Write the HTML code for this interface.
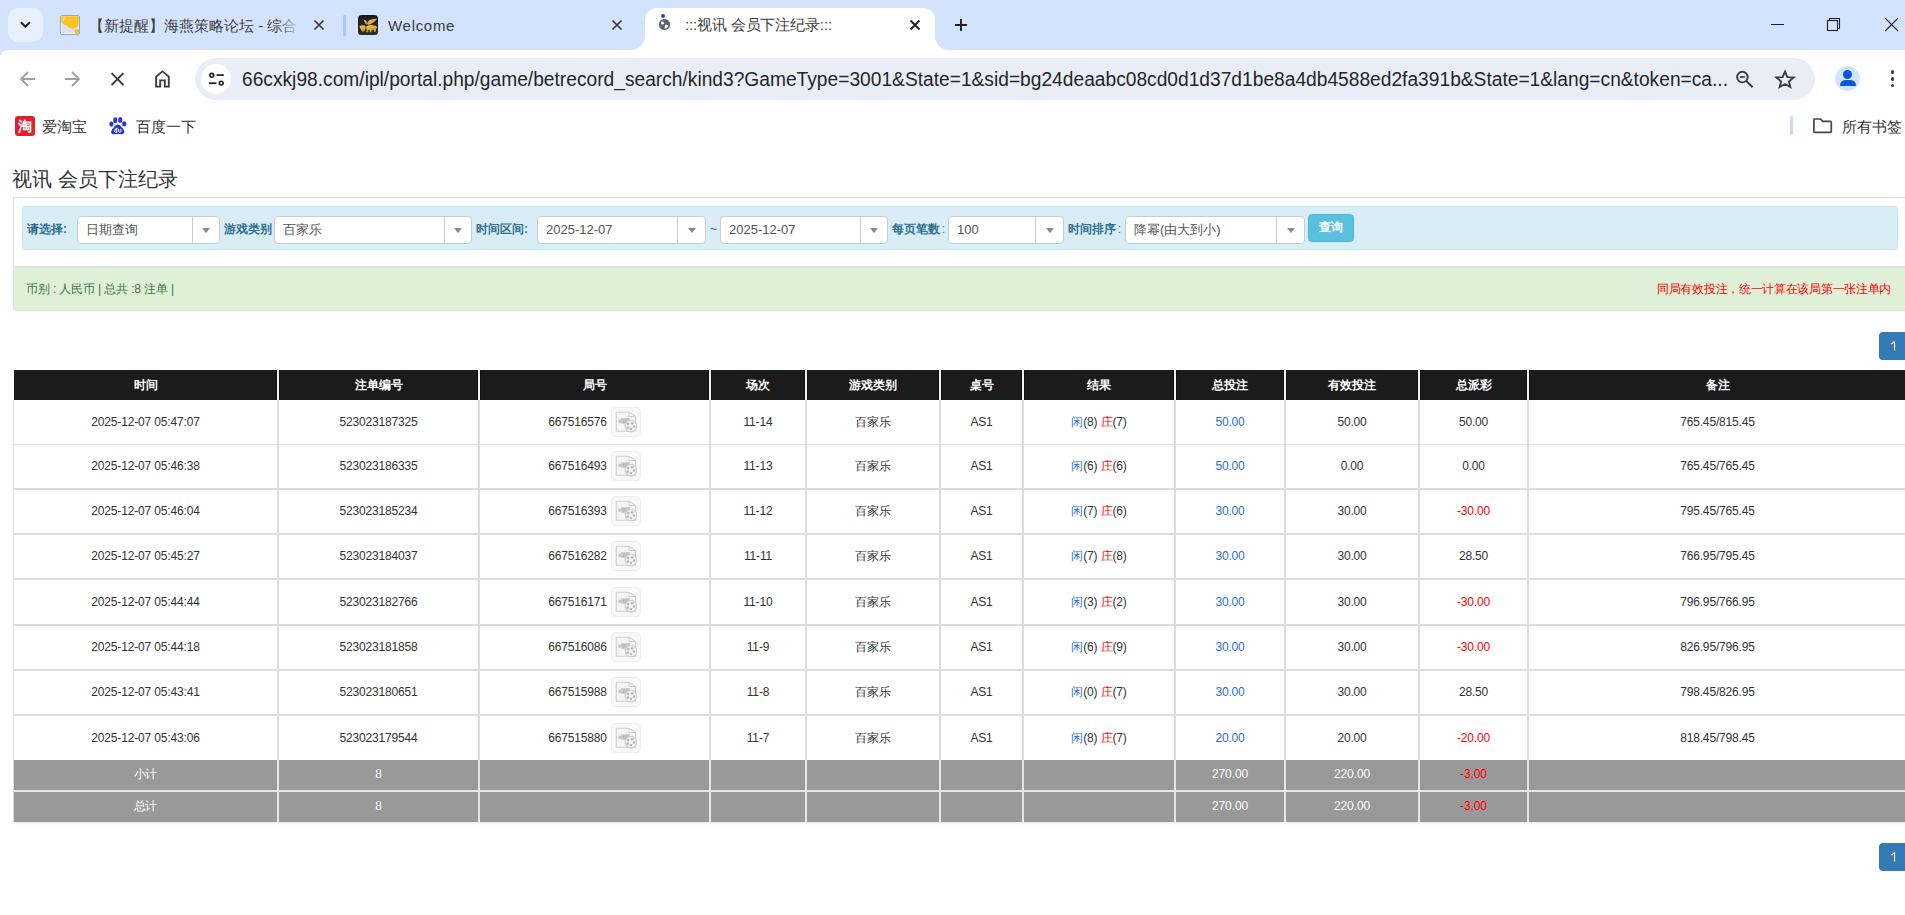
<!DOCTYPE html>
<html><head><meta charset="utf-8">
<style>
*{box-sizing:border-box}
html,body{margin:0;padding:0}
body{width:1905px;height:915px;overflow:hidden;position:relative;background:#fff;font-family:"Liberation Sans",sans-serif;color:#333}
.a{position:absolute}
/* chrome */
#strip{left:0;top:0;width:1905px;height:60px;background:#d3e3fd}
#toolbar{left:0;top:50px;width:1905px;height:865px;background:#fff;border-radius:8px 0 0 0}
.tabtxt{font-size:15px;color:#3c3c3c;white-space:nowrap;overflow:hidden;line-height:20px}
#omni{left:195px;top:58px;width:1620px;height:42px;border-radius:21px;background:#e9eef6}
#url{left:242px;top:68px;font-size:19.19px;line-height:22px;color:#262626;white-space:nowrap;transform:scaleY(1.08);transform-origin:0 0}
.bm{font-size:15px;color:#333;line-height:20px;white-space:nowrap;margin-top:1px}
/* page */
#title{left:12px;top:167px;font-size:20px;line-height:24px;color:#333;white-space:nowrap}
#panel{left:13px;top:197px;width:1900px;height:70px;border:1px solid #ddd;border-right:none;background:#fff}
#info{left:22px;top:206px;width:1876px;height:44px;background:#d9edf7;border:1px solid #bce8f1;border-radius:4px}
.lbl{font-size:12px;font-weight:bold;color:#31708f;line-height:16px;top:221px;white-space:nowrap}
.sel{top:216px;height:28px;background:#fff;border:1px solid #ccc;border-radius:4px}
.sel .t{position:absolute;left:8px;top:5px;font-size:13px;line-height:16px;color:#555;white-space:nowrap}
.sel .d{position:absolute;top:0;bottom:0;width:1px;background:#ccc}
.sel .ar{position:absolute;top:11px;width:0;height:0;border-left:4px solid transparent;border-right:4px solid transparent;border-top:5px solid #888}
#btn{left:1308px;top:214px;width:46px;height:28px;background:#5bc0de;border:1px solid #46b8da;border-radius:4px;color:#fff;font-size:12px;font-weight:bold;line-height:24px;text-align:center}
#succ{left:13px;top:267px;width:1900px;height:44px;background:#dff0d8;border:1px solid #d6e9c6;border-radius:3px}
#succL{left:26px;top:281px;font-size:12px;letter-spacing:-0.14px;line-height:16px;color:#3c763d;white-space:nowrap}
#succR{left:1657px;top:281px;font-size:12px;letter-spacing:-0.3px;line-height:16px;color:#f00;white-space:nowrap}
.pg{width:30px;height:28px;background:#337ab7;border-radius:4px 0 0 4px;color:#fff;font-size:12px;line-height:28px;text-align:center;padding-right:2px}
/* table */
.hd{background:#1b1b1b;color:#fff;font-size:12px;font-weight:bold;text-align:center;line-height:30px;white-space:nowrap}
.c{text-align:center;font-size:12px;white-space:nowrap;color:#333;letter-spacing:-0.16px}
.vl{background:#ddd}
.hl{background:#ddd}
.ft{color:#fff;font-size:12px;text-align:center;line-height:28px;letter-spacing:-0.1px}
.blue{color:#2a6fdb}
.red{color:#f00}
.ico{display:inline-block;vertical-align:middle;width:30px;height:30px;border:1px solid #ececec;border-radius:5px;background:#f8f8f8;margin-left:4px;position:relative;margin-top:-2px}
.ico svg{position:absolute;left:-1px;top:-1px}
</style></head><body>

<!-- ===== TAB STRIP ===== -->
<div class="a" id="strip"></div>
<!-- dropdown btn -->
<div class="a" style="left:8px;top:8px;width:35px;height:34px;border-radius:10px;background:#e9f0fd"></div>
<svg class="a" style="left:17px;top:17px" width="17" height="17" viewBox="0 0 17 17"><path d="M3.9 5.2 L8.4 9.7 L12.9 5.2" fill="none" stroke="#1f1f1f" stroke-width="2"/></svg>

<!-- tab 1 -->
<svg class="a" style="left:60px;top:15px" width="20" height="20" viewBox="0 0 20 20"><rect x="0.5" y="0.5" width="19" height="19" rx="1.5" fill="#dae3f0" stroke="#93a9c9"/><rect x="1.5" y="1.5" width="17" height="17" fill="none" stroke="#f2f6fb"/><path d="M1.2 1.3 H18.8 V6.5 Q18.8 13.6 12.8 13.6 Q8.6 13.6 7.2 10.6 Q3.2 10.2 1.2 7 Z" fill="#fbc320"/><path d="M2.5 2.5 Q4.5 1.8 6 2.2 Q4 4 3.5 8 Q2.2 6 2.5 2.5Z" fill="#fde08a" opacity="0.7"/><circle cx="16.9" cy="16.6" r="2.4" fill="#f7bd18"/></svg>
<div class="a tabtxt" style="left:89px;top:16px;width:211px">【新提醒】海燕策略论坛 - 综合</div>
<div class="a" style="left:277px;top:14px;width:26px;height:22px;background:linear-gradient(to right,rgba(211,227,253,0),rgba(211,227,253,0.85) 75%,#d3e3fd)"></div>
<svg class="a" style="left:313px;top:19px" width="12" height="12" viewBox="0 0 12 12"><path d="M1.5 1.5 L10.5 10.5 M10.5 1.5 L1.5 10.5" stroke="#3c3c3c" stroke-width="1.7"/></svg>
<div class="a" style="left:343px;top:15px;width:3px;height:21px;border-radius:2px;background:#a8c7fa"></div>

<!-- tab 2 -->
<svg class="a" style="left:358px;top:15px" width="20" height="20" viewBox="0 0 20 20"><defs><linearGradient id="g2" x1="0" y1="0" x2="0" y2="1"><stop offset="0" stop-color="#1c1c1c"/><stop offset="1" stop-color="#2c2c2c"/></linearGradient><linearGradient id="au" x1="0" y1="0" x2="1" y2="1"><stop offset="0" stop-color="#f2cf55"/><stop offset="1" stop-color="#c98a12"/></linearGradient></defs><rect x="0" y="0" width="20" height="20" rx="3.5" fill="url(#g2)"/><path d="M9 9 Q10 5.2 13 4.6 Q17 4.2 19.2 3.5 Q17.6 6.4 14.5 8 Q12.5 9.4 10.5 10 Z" fill="url(#au)"/><path d="M5.5 4.8 Q7.5 4.5 8.6 6.5 Q9.4 8.5 8.2 10 Z" fill="#e8b83a"/><ellipse cx="13.5" cy="12.6" rx="5.6" ry="2.6" fill="url(#au)"/><path d="M1.5 11 Q4 10 6.5 10.2 Q8.2 11 7.6 13.5 Q6.6 16.5 5.2 16.8 Q3 16.5 1.5 11Z" fill="url(#au)"/><path d="M8.6 14 H10.6 L10.2 17.2 H8.4Z M12 14.2 H13.8 L13.4 17.2 H11.6Z M16 13.6 H18 L17.8 16.8 H16.2Z" fill="#d9a02a"/></svg>
<div class="a tabtxt" style="left:388px;top:16px;letter-spacing:0.7px">Welcome</div>
<svg class="a" style="left:611px;top:19px" width="12" height="12" viewBox="0 0 12 12"><path d="M1.5 1.5 L10.5 10.5 M10.5 1.5 L1.5 10.5" stroke="#3c3c3c" stroke-width="1.7"/></svg>

<!-- active tab -->
<div class="a" style="left:645px;top:8px;width:290px;height:42px;background:#fff;border-radius:12px 12px 0 0"></div>
<div class="a" style="left:631px;top:36px;width:14px;height:14px;background:#fff"></div>
<div class="a" style="left:631px;top:36px;width:14px;height:14px;background:#d3e3fd;border-radius:0 0 14px 0"></div>
<div class="a" style="left:935px;top:36px;width:14px;height:14px;background:#fff"></div>
<div class="a" style="left:935px;top:36px;width:14px;height:14px;background:#d3e3fd;border-radius:0 0 0 14px"></div>
<div class="a" style="left:661px;top:14px;width:4px;height:4px;border-radius:2px;background:#0b57d0"></div>
<svg class="a" style="left:658px;top:18px" width="13" height="13" viewBox="0 0 13 13"><circle cx="6.5" cy="6.5" r="5.6" fill="#5f6368"/><path d="M3.2 3.6 Q5.2 3.4 6.2 4.6 Q6.6 5.6 5.4 6.2 Q4.2 6.6 3.4 6.2 Q2.6 5 3.2 3.6Z" fill="#fff"/><path d="M7.6 6.8 Q9.6 6.8 10.4 7.6 Q9.6 10.4 6.8 11 Q6.4 9.4 6.9 8.2 Q7 7.2 7.6 6.8Z" fill="#fff"/></svg>
<div class="a tabtxt" style="left:685px;top:15px;letter-spacing:-0.15px">:::视讯 会员下注纪录:::</div>
<svg class="a" style="left:909px;top:19px" width="12" height="12" viewBox="0 0 12 12"><path d="M1.5 1.5 L10.5 10.5 M10.5 1.5 L1.5 10.5" stroke="#1f1f1f" stroke-width="1.9"/></svg>
<!-- new tab plus -->
<svg class="a" style="left:954px;top:18px" width="14" height="14" viewBox="0 0 14 14"><path d="M7 1 V13 M1 7 H13" stroke="#1f1f1f" stroke-width="1.9"/></svg>

<!-- window controls -->
<div class="a" style="left:1771px;top:24px;width:13px;height:1px;background:#1f1f1f"></div>
<svg class="a" style="left:1826px;top:18px" width="15" height="15" viewBox="0 0 15 15"><rect x="1.5" y="2.5" width="10" height="10" fill="none" stroke="#1f1f1f" stroke-width="1.1"/><path d="M3.5 2.5 V0.5 H13.5 V10.5 H11.5" fill="none" stroke="#1f1f1f" stroke-width="1.1"/></svg>
<svg class="a" style="left:1884px;top:17px" width="16" height="16" viewBox="0 0 16 16"><path d="M1.2 1.2 L14 14 M14 1.2 L1.2 14" stroke="#262626" stroke-width="1.2"/></svg>

<!-- ===== TOOLBAR ===== -->
<div class="a" id="toolbar"></div>
<!-- back / fwd -->
<svg class="a" style="left:18px;top:69px" width="20" height="20" viewBox="0 0 20 20"><path d="M17 10 H3.5 M10 3 L3 10 L10 17" fill="none" stroke="#a0a0a0" stroke-width="1.8"/></svg>
<svg class="a" style="left:62px;top:69px" width="20" height="20" viewBox="0 0 20 20"><path d="M3 10 H16.5 M10 3 L17 10 L10 17" fill="none" stroke="#a0a0a0" stroke-width="1.8"/></svg>
<!-- stop -->
<svg class="a" style="left:108px;top:70px" width="18" height="18" viewBox="0 0 18 18"><path d="M3.6 3.2 L15.4 15 M15.4 3.2 L3.6 15" stroke="#3c3c3c" stroke-width="1.9"/></svg>
<!-- home -->
<svg class="a" style="left:152px;top:69px" width="20" height="20" viewBox="0 0 20 20"><path d="M4.1 17.6 V7.6 L10.45 2.4 L16.8 7.6 V17.6 H12.8 V11.4 H8.2 V17.6 Z" fill="none" stroke="#3c3c3c" stroke-width="1.85" stroke-linejoin="miter"/></svg>
<!-- omnibox -->
<div class="a" id="omni"></div>
<div class="a" style="left:201px;top:64px;width:30px;height:30px;border-radius:15px;background:#fff"></div>
<svg class="a" style="left:206px;top:69px" width="20" height="20" viewBox="0 0 20 20"><circle cx="5.8" cy="6.3" r="1.9" fill="none" stroke="#1f1f1f" stroke-width="1.6"/><path d="M10.5 6.1 H17.8" stroke="#1f1f1f" stroke-width="1.7"/><circle cx="15.2" cy="14.1" r="1.9" fill="none" stroke="#1f1f1f" stroke-width="1.6"/><path d="M3 14.2 H10.5" stroke="#1f1f1f" stroke-width="1.7"/></svg>
<div class="a" id="url">66cxkj98.com/ipl/portal.php/game/betrecord_search/kind3?GameType=3001&amp;State=1&amp;sid=bg24deaabc08cd0d1d37d1be8a4db4588ed2fa391b&amp;State=1&amp;lang=cn&amp;token=ca...</div>
<!-- zoom icon -->
<svg class="a" style="left:1733px;top:68px" width="22" height="22" viewBox="0 0 22 22"><circle cx="9.4" cy="9.1" r="5.3" fill="none" stroke="#3c3c3c" stroke-width="1.9"/><path d="M7 9 H11.9" stroke="#3c3c3c" stroke-width="1.7"/><path d="M13.3 12.9 L19.6 19.2" stroke="#3c3c3c" stroke-width="2"/></svg>
<!-- star -->
<svg class="a" style="left:1774px;top:69px" width="22" height="21" viewBox="0 0 22 21"><path d="M11 2.6 L13.4 8.1 L19.6 8.5 L14.9 12.5 L16.3 18 L11 15 L5.7 18 L7.1 12.5 L2.4 8.5 L8.6 8.1 Z" fill="none" stroke="#3c3c3c" stroke-width="1.9" stroke-linejoin="miter"/></svg>
<!-- profile -->
<div class="a" style="left:1835px;top:66px;width:25px;height:25px;border-radius:13px;background:#d3e3fd;overflow:hidden">
  <div class="a" style="left:8px;top:4px;width:9px;height:9px;border-radius:5px;background:#0b57d0"></div>
  <div class="a" style="left:4.5px;top:13.5px;width:16px;height:6.5px;border-radius:6px 6px 1px 1px;background:#0b57d0"></div>
</div>
<!-- menu -->
<div class="a" style="left:1890.5px;top:70px;width:3.6px;height:3.6px;border-radius:2px;background:#3c3c3c"></div>
<div class="a" style="left:1890.5px;top:77px;width:3.6px;height:3.6px;border-radius:2px;background:#3c3c3c"></div>
<div class="a" style="left:1890.5px;top:83.8px;width:3.6px;height:3.6px;border-radius:2px;background:#3c3c3c"></div>

<!-- ===== BOOKMARKS ===== -->
<div class="a" style="left:15px;top:116px;width:20px;height:20px;border-radius:3px;background:#e0202c;color:#fff;font-size:14px;font-weight:bold;line-height:20px;text-align:center">淘</div>
<div class="a bm" style="left:42px;top:116px">爱淘宝</div>
<svg class="a" style="left:109px;top:116px" width="18" height="20" viewBox="0 0 18 20"><ellipse cx="6.3" cy="4.2" rx="2" ry="2.9" fill="#2932e1"/><ellipse cx="11.2" cy="4" rx="2" ry="2.9" fill="#2932e1"/><ellipse cx="2.4" cy="8.1" rx="2.1" ry="2.7" fill="#2932e1"/><ellipse cx="15.2" cy="7.9" rx="2.1" ry="2.7" fill="#2932e1"/><path d="M8.8 8.6 Q11 8.6 13 11.6 Q15.6 14.6 15.4 16.2 Q15.2 18.3 12.4 18.3 Q10.6 18 8.8 18 Q7 18 5.2 18.3 Q2.2 18.3 2.1 16.2 Q2 14.6 4.6 11.6 Q6.6 8.6 8.8 8.6Z" fill="#2932e1"/><path d="M5.6 14.2 Q5.6 12.9 6.9 12.9 H7.8 V11.6 M7.8 12 V16.3 H6.8 Q5.6 16.3 5.6 15 Z M9.7 12.9 V15.2 Q9.7 16.3 10.8 16.3 Q11.9 16.3 11.9 15.2 V12.9" fill="none" stroke="#fff" stroke-width="1"/></svg>
<div class="a bm" style="left:136px;top:116px">百度一下</div>
<div class="a" style="left:1790px;top:116px;width:3px;height:19px;background:#c6dafc;border-radius:1.5px"></div>
<svg class="a" style="left:1812px;top:117px" width="21" height="17" viewBox="0 0 21 17"><path d="M1.9 2.9 Q1.9 2 2.8 2 H8.6 L10.6 4.4 H18.4 Q19.3 4.4 19.3 5.3 V14.4 Q19.3 15.3 18.4 15.3 H2.8 Q1.9 15.3 1.9 14.4 Z" fill="none" stroke="#474747" stroke-width="1.7" stroke-linejoin="round"/></svg>
<div class="a bm" style="left:1842px;top:116px">所有书签</div>

<!-- ===== PAGE ===== -->
<div class="a" id="title">视讯 会员下注纪录</div>
<div class="a" id="panel"></div>
<div class="a" id="info"></div>
<div class="a lbl" style="left:27px">请选择:</div>
<div class="a sel" style="left:77px;width:143px"><span class="t">日期查询</span><span class="d" style="left:114px"></span><span class="ar" style="left:124px"></span></div>
<div class="a lbl" style="left:224px">游戏类别</div>
<div class="a sel" style="left:274px;width:198px"><span class="t">百家乐</span><span class="d" style="left:169px"></span><span class="ar" style="left:179px"></span></div>
<div class="a lbl" style="left:476px">时间区间:</div>
<div class="a sel" style="left:537px;width:169px"><span class="t">2025-12-07</span><span class="d" style="left:139px"></span><span class="ar" style="left:150px"></span></div>
<div class="a lbl" style="left:710px;font-weight:normal;color:#555">~</div>
<div class="a sel" style="left:720px;width:168px"><span class="t">2025-12-07</span><span class="d" style="left:139px"></span><span class="ar" style="left:149px"></span></div>
<div class="a lbl" style="left:892px">每页笔数 <span style="font-weight:normal;margin-left:-1.5px">:</span></div>
<div class="a sel" style="left:948px;width:116px"><span class="t">100</span><span class="d" style="left:86px"></span><span class="ar" style="left:97px"></span></div>
<div class="a lbl" style="left:1068px">时间排序 <span style="font-weight:normal;margin-left:-1.5px">:</span></div>
<div class="a sel" style="left:1125px;width:180px"><span class="t">降幂(由大到小)</span><span class="d" style="left:150px"></span><span class="ar" style="left:161px"></span></div>
<div class="a" id="btn">查询</div>

<div class="a" id="succ"></div>
<div class="a" id="succL">币别 : 人民币 | 总共 :8 注单 |</div>
<div class="a" id="succR">同局有效投注，统一计算在该局第一张注单内</div>

<div class="a pg" style="left:1879px;top:332px"><svg class="a" style="left:11px;top:9px" width="6" height="10" viewBox="0 0 6 10"><path d="M4 0.2 H5.1 V9.4 H4 V1.8 Q2.9 2.9 1 3.6 V2.5 Q3 1.6 4 0.2Z" fill="#fff"/></svg></div>

<!-- TABLE -->
<div class="a" style="left:14px;top:370px;width:1892px;height:30px;background:#1b1b1b"></div>
<div class="a" style="left:13px;top:400px;width:1px;height:422px;background:#ddd"></div>
<div class="a hd" style="left:14px;top:370px;width:263px;height:30px">时间</div>
<div class="a hd" style="left:279px;top:370px;width:199px;height:30px">注单编号</div>
<div class="a hd" style="left:480px;top:370px;width:229px;height:30px">局号</div>
<div class="a hd" style="left:711px;top:370px;width:94px;height:30px">场次</div>
<div class="a hd" style="left:807px;top:370px;width:132px;height:30px">游戏类别</div>
<div class="a hd" style="left:941px;top:370px;width:81px;height:30px">桌号</div>
<div class="a hd" style="left:1024px;top:370px;width:150px;height:30px">结果</div>
<div class="a hd" style="left:1176px;top:370px;width:108px;height:30px">总投注</div>
<div class="a hd" style="left:1286px;top:370px;width:132px;height:30px">有效投注</div>
<div class="a hd" style="left:1420px;top:370px;width:107px;height:30px">总派彩</div>
<div class="a hd" style="left:1529px;top:370px;width:377px;height:30px">备注</div>
<div class="a" style="left:276px;top:370px;width:1px;height:30px;background:#111"></div>
<div class="a" style="left:279px;top:370px;width:1px;height:30px;background:#111"></div>
<div class="a" style="left:277px;top:370px;width:2px;height:30px;background:#f2f2f2"></div>
<div class="a" style="left:277px;top:400px;width:2px;height:360px;background:#ddd"></div>
<div class="a" style="left:277px;top:760px;width:2px;height:62px;background:#e6e6e6"></div>
<div class="a" style="left:477px;top:370px;width:1px;height:30px;background:#111"></div>
<div class="a" style="left:480px;top:370px;width:1px;height:30px;background:#111"></div>
<div class="a" style="left:478px;top:370px;width:2px;height:30px;background:#f2f2f2"></div>
<div class="a" style="left:478px;top:400px;width:2px;height:360px;background:#ddd"></div>
<div class="a" style="left:478px;top:760px;width:2px;height:62px;background:#e6e6e6"></div>
<div class="a" style="left:708px;top:370px;width:1px;height:30px;background:#111"></div>
<div class="a" style="left:711px;top:370px;width:1px;height:30px;background:#111"></div>
<div class="a" style="left:709px;top:370px;width:2px;height:30px;background:#f2f2f2"></div>
<div class="a" style="left:709px;top:400px;width:2px;height:360px;background:#ddd"></div>
<div class="a" style="left:709px;top:760px;width:2px;height:62px;background:#e6e6e6"></div>
<div class="a" style="left:804px;top:370px;width:1px;height:30px;background:#111"></div>
<div class="a" style="left:807px;top:370px;width:1px;height:30px;background:#111"></div>
<div class="a" style="left:805px;top:370px;width:2px;height:30px;background:#f2f2f2"></div>
<div class="a" style="left:805px;top:400px;width:2px;height:360px;background:#ddd"></div>
<div class="a" style="left:805px;top:760px;width:2px;height:62px;background:#e6e6e6"></div>
<div class="a" style="left:938px;top:370px;width:1px;height:30px;background:#111"></div>
<div class="a" style="left:941px;top:370px;width:1px;height:30px;background:#111"></div>
<div class="a" style="left:939px;top:370px;width:2px;height:30px;background:#f2f2f2"></div>
<div class="a" style="left:939px;top:400px;width:2px;height:360px;background:#ddd"></div>
<div class="a" style="left:939px;top:760px;width:2px;height:62px;background:#e6e6e6"></div>
<div class="a" style="left:1021px;top:370px;width:1px;height:30px;background:#111"></div>
<div class="a" style="left:1024px;top:370px;width:1px;height:30px;background:#111"></div>
<div class="a" style="left:1022px;top:370px;width:2px;height:30px;background:#f2f2f2"></div>
<div class="a" style="left:1022px;top:400px;width:2px;height:360px;background:#ddd"></div>
<div class="a" style="left:1022px;top:760px;width:2px;height:62px;background:#e6e6e6"></div>
<div class="a" style="left:1173px;top:370px;width:1px;height:30px;background:#111"></div>
<div class="a" style="left:1176px;top:370px;width:1px;height:30px;background:#111"></div>
<div class="a" style="left:1174px;top:370px;width:2px;height:30px;background:#f2f2f2"></div>
<div class="a" style="left:1174px;top:400px;width:2px;height:360px;background:#ddd"></div>
<div class="a" style="left:1174px;top:760px;width:2px;height:62px;background:#e6e6e6"></div>
<div class="a" style="left:1283px;top:370px;width:1px;height:30px;background:#111"></div>
<div class="a" style="left:1286px;top:370px;width:1px;height:30px;background:#111"></div>
<div class="a" style="left:1284px;top:370px;width:2px;height:30px;background:#f2f2f2"></div>
<div class="a" style="left:1284px;top:400px;width:2px;height:360px;background:#ddd"></div>
<div class="a" style="left:1284px;top:760px;width:2px;height:62px;background:#e6e6e6"></div>
<div class="a" style="left:1417px;top:370px;width:1px;height:30px;background:#111"></div>
<div class="a" style="left:1420px;top:370px;width:1px;height:30px;background:#111"></div>
<div class="a" style="left:1418px;top:370px;width:2px;height:30px;background:#f2f2f2"></div>
<div class="a" style="left:1418px;top:400px;width:2px;height:360px;background:#ddd"></div>
<div class="a" style="left:1418px;top:760px;width:2px;height:62px;background:#e6e6e6"></div>
<div class="a" style="left:1526px;top:370px;width:1px;height:30px;background:#111"></div>
<div class="a" style="left:1529px;top:370px;width:1px;height:30px;background:#111"></div>
<div class="a" style="left:1527px;top:370px;width:2px;height:30px;background:#f2f2f2"></div>
<div class="a" style="left:1527px;top:400px;width:2px;height:360px;background:#ddd"></div>
<div class="a" style="left:1527px;top:760px;width:2px;height:62px;background:#e6e6e6"></div>
<div class="a" style="left:14px;top:444px;width:1892px;height:1px;background:#ddd"></div>
<div class="a" style="left:14px;top:488px;width:1892px;height:2px;background:#ddd"></div>
<div class="a" style="left:14px;top:533px;width:1892px;height:2px;background:#ddd"></div>
<div class="a" style="left:14px;top:578px;width:1892px;height:2px;background:#ddd"></div>
<div class="a" style="left:14px;top:624px;width:1892px;height:2px;background:#ddd"></div>
<div class="a" style="left:14px;top:669px;width:1892px;height:2px;background:#ddd"></div>
<div class="a" style="left:14px;top:714px;width:1892px;height:2px;background:#ddd"></div>
<div class="a c" style="left:14px;top:400px;width:263px;height:44px;line-height:44px">2025-12-07 05:47:07</div>
<div class="a c" style="left:279px;top:400px;width:199px;height:44px;line-height:44px">523023187325</div>
<div class="a c" style="left:480px;top:400px;width:229px;height:44px;line-height:44px">667516576<span class="ico"><svg width="30" height="30" viewBox="0 0 30 30"><path d="M5.3 5.3 H18 L24.5 9.5 V24.2 H5.3 Z" fill="#f5f5f5" stroke="#cfcfcf" stroke-width="1.1"/><path d="M18 5.3 V9.5 H24.5 Z" fill="#fff" stroke="#cfcfcf" stroke-width="1"/><rect x="10.3" y="11.3" width="8.6" height="5.4" fill="#c2c2c2"/><path d="M7.6 12.2 L10.4 13 V15.4 L7.6 16.2 Z" fill="#c4c4c4"/><circle cx="19.9" cy="19.1" r="5.8" fill="#f3f3f3" stroke="#cdcdcd" stroke-width="1.1"/><circle cx="17.1" cy="17.1" r="1.35" fill="#bababa"/><circle cx="21.2" cy="16.3" r="1.35" fill="#bababa"/><circle cx="23" cy="19.6" r="1.35" fill="#bababa"/><circle cx="19.9" cy="22" r="1.35" fill="#bababa"/><circle cx="16.7" cy="20.7" r="1.35" fill="#bababa"/></svg></span></div>
<div class="a c" style="left:711px;top:400px;width:94px;height:44px;line-height:44px">11-14</div>
<div class="a c" style="left:807px;top:400px;width:132px;height:44px;line-height:44px">百家乐</div>
<div class="a c" style="left:941px;top:400px;width:81px;height:44px;line-height:44px">AS1</div>
<div class="a c" style="left:1024px;top:400px;width:150px;height:44px;line-height:44px"><span class="blue">闲</span>(8) <span class="red">庄</span>(7)</div>
<div class="a c" style="left:1176px;top:400px;width:108px;height:44px;line-height:44px"><span class="blue">50.00</span></div>
<div class="a c" style="left:1286px;top:400px;width:132px;height:44px;line-height:44px">50.00</div>
<div class="a c" style="left:1420px;top:400px;width:107px;height:44px;line-height:44px">50.00</div>
<div class="a c" style="left:1529px;top:400px;width:377px;height:44px;line-height:44px">765.45/815.45</div>
<div class="a c" style="left:14px;top:445px;width:263px;height:43px;line-height:43px">2025-12-07 05:46:38</div>
<div class="a c" style="left:279px;top:445px;width:199px;height:43px;line-height:43px">523023186335</div>
<div class="a c" style="left:480px;top:445px;width:229px;height:43px;line-height:43px">667516493<span class="ico"><svg width="30" height="30" viewBox="0 0 30 30"><path d="M5.3 5.3 H18 L24.5 9.5 V24.2 H5.3 Z" fill="#f5f5f5" stroke="#cfcfcf" stroke-width="1.1"/><path d="M18 5.3 V9.5 H24.5 Z" fill="#fff" stroke="#cfcfcf" stroke-width="1"/><rect x="10.3" y="11.3" width="8.6" height="5.4" fill="#c2c2c2"/><path d="M7.6 12.2 L10.4 13 V15.4 L7.6 16.2 Z" fill="#c4c4c4"/><circle cx="19.9" cy="19.1" r="5.8" fill="#f3f3f3" stroke="#cdcdcd" stroke-width="1.1"/><circle cx="17.1" cy="17.1" r="1.35" fill="#bababa"/><circle cx="21.2" cy="16.3" r="1.35" fill="#bababa"/><circle cx="23" cy="19.6" r="1.35" fill="#bababa"/><circle cx="19.9" cy="22" r="1.35" fill="#bababa"/><circle cx="16.7" cy="20.7" r="1.35" fill="#bababa"/></svg></span></div>
<div class="a c" style="left:711px;top:445px;width:94px;height:43px;line-height:43px">11-13</div>
<div class="a c" style="left:807px;top:445px;width:132px;height:43px;line-height:43px">百家乐</div>
<div class="a c" style="left:941px;top:445px;width:81px;height:43px;line-height:43px">AS1</div>
<div class="a c" style="left:1024px;top:445px;width:150px;height:43px;line-height:43px"><span class="blue">闲</span>(6) <span class="red">庄</span>(6)</div>
<div class="a c" style="left:1176px;top:445px;width:108px;height:43px;line-height:43px"><span class="blue">50.00</span></div>
<div class="a c" style="left:1286px;top:445px;width:132px;height:43px;line-height:43px">0.00</div>
<div class="a c" style="left:1420px;top:445px;width:107px;height:43px;line-height:43px">0.00</div>
<div class="a c" style="left:1529px;top:445px;width:377px;height:43px;line-height:43px">765.45/765.45</div>
<div class="a c" style="left:14px;top:490px;width:263px;height:43px;line-height:43px">2025-12-07 05:46:04</div>
<div class="a c" style="left:279px;top:490px;width:199px;height:43px;line-height:43px">523023185234</div>
<div class="a c" style="left:480px;top:490px;width:229px;height:43px;line-height:43px">667516393<span class="ico"><svg width="30" height="30" viewBox="0 0 30 30"><path d="M5.3 5.3 H18 L24.5 9.5 V24.2 H5.3 Z" fill="#f5f5f5" stroke="#cfcfcf" stroke-width="1.1"/><path d="M18 5.3 V9.5 H24.5 Z" fill="#fff" stroke="#cfcfcf" stroke-width="1"/><rect x="10.3" y="11.3" width="8.6" height="5.4" fill="#c2c2c2"/><path d="M7.6 12.2 L10.4 13 V15.4 L7.6 16.2 Z" fill="#c4c4c4"/><circle cx="19.9" cy="19.1" r="5.8" fill="#f3f3f3" stroke="#cdcdcd" stroke-width="1.1"/><circle cx="17.1" cy="17.1" r="1.35" fill="#bababa"/><circle cx="21.2" cy="16.3" r="1.35" fill="#bababa"/><circle cx="23" cy="19.6" r="1.35" fill="#bababa"/><circle cx="19.9" cy="22" r="1.35" fill="#bababa"/><circle cx="16.7" cy="20.7" r="1.35" fill="#bababa"/></svg></span></div>
<div class="a c" style="left:711px;top:490px;width:94px;height:43px;line-height:43px">11-12</div>
<div class="a c" style="left:807px;top:490px;width:132px;height:43px;line-height:43px">百家乐</div>
<div class="a c" style="left:941px;top:490px;width:81px;height:43px;line-height:43px">AS1</div>
<div class="a c" style="left:1024px;top:490px;width:150px;height:43px;line-height:43px"><span class="blue">闲</span>(7) <span class="red">庄</span>(6)</div>
<div class="a c" style="left:1176px;top:490px;width:108px;height:43px;line-height:43px"><span class="blue">30.00</span></div>
<div class="a c" style="left:1286px;top:490px;width:132px;height:43px;line-height:43px">30.00</div>
<div class="a c" style="left:1420px;top:490px;width:107px;height:43px;line-height:43px"><span class="red">-30.00</span></div>
<div class="a c" style="left:1529px;top:490px;width:377px;height:43px;line-height:43px">795.45/765.45</div>
<div class="a c" style="left:14px;top:535px;width:263px;height:43px;line-height:43px">2025-12-07 05:45:27</div>
<div class="a c" style="left:279px;top:535px;width:199px;height:43px;line-height:43px">523023184037</div>
<div class="a c" style="left:480px;top:535px;width:229px;height:43px;line-height:43px">667516282<span class="ico"><svg width="30" height="30" viewBox="0 0 30 30"><path d="M5.3 5.3 H18 L24.5 9.5 V24.2 H5.3 Z" fill="#f5f5f5" stroke="#cfcfcf" stroke-width="1.1"/><path d="M18 5.3 V9.5 H24.5 Z" fill="#fff" stroke="#cfcfcf" stroke-width="1"/><rect x="10.3" y="11.3" width="8.6" height="5.4" fill="#c2c2c2"/><path d="M7.6 12.2 L10.4 13 V15.4 L7.6 16.2 Z" fill="#c4c4c4"/><circle cx="19.9" cy="19.1" r="5.8" fill="#f3f3f3" stroke="#cdcdcd" stroke-width="1.1"/><circle cx="17.1" cy="17.1" r="1.35" fill="#bababa"/><circle cx="21.2" cy="16.3" r="1.35" fill="#bababa"/><circle cx="23" cy="19.6" r="1.35" fill="#bababa"/><circle cx="19.9" cy="22" r="1.35" fill="#bababa"/><circle cx="16.7" cy="20.7" r="1.35" fill="#bababa"/></svg></span></div>
<div class="a c" style="left:711px;top:535px;width:94px;height:43px;line-height:43px">11-11</div>
<div class="a c" style="left:807px;top:535px;width:132px;height:43px;line-height:43px">百家乐</div>
<div class="a c" style="left:941px;top:535px;width:81px;height:43px;line-height:43px">AS1</div>
<div class="a c" style="left:1024px;top:535px;width:150px;height:43px;line-height:43px"><span class="blue">闲</span>(7) <span class="red">庄</span>(8)</div>
<div class="a c" style="left:1176px;top:535px;width:108px;height:43px;line-height:43px"><span class="blue">30.00</span></div>
<div class="a c" style="left:1286px;top:535px;width:132px;height:43px;line-height:43px">30.00</div>
<div class="a c" style="left:1420px;top:535px;width:107px;height:43px;line-height:43px">28.50</div>
<div class="a c" style="left:1529px;top:535px;width:377px;height:43px;line-height:43px">766.95/795.45</div>
<div class="a c" style="left:14px;top:580px;width:263px;height:44px;line-height:44px">2025-12-07 05:44:44</div>
<div class="a c" style="left:279px;top:580px;width:199px;height:44px;line-height:44px">523023182766</div>
<div class="a c" style="left:480px;top:580px;width:229px;height:44px;line-height:44px">667516171<span class="ico"><svg width="30" height="30" viewBox="0 0 30 30"><path d="M5.3 5.3 H18 L24.5 9.5 V24.2 H5.3 Z" fill="#f5f5f5" stroke="#cfcfcf" stroke-width="1.1"/><path d="M18 5.3 V9.5 H24.5 Z" fill="#fff" stroke="#cfcfcf" stroke-width="1"/><rect x="10.3" y="11.3" width="8.6" height="5.4" fill="#c2c2c2"/><path d="M7.6 12.2 L10.4 13 V15.4 L7.6 16.2 Z" fill="#c4c4c4"/><circle cx="19.9" cy="19.1" r="5.8" fill="#f3f3f3" stroke="#cdcdcd" stroke-width="1.1"/><circle cx="17.1" cy="17.1" r="1.35" fill="#bababa"/><circle cx="21.2" cy="16.3" r="1.35" fill="#bababa"/><circle cx="23" cy="19.6" r="1.35" fill="#bababa"/><circle cx="19.9" cy="22" r="1.35" fill="#bababa"/><circle cx="16.7" cy="20.7" r="1.35" fill="#bababa"/></svg></span></div>
<div class="a c" style="left:711px;top:580px;width:94px;height:44px;line-height:44px">11-10</div>
<div class="a c" style="left:807px;top:580px;width:132px;height:44px;line-height:44px">百家乐</div>
<div class="a c" style="left:941px;top:580px;width:81px;height:44px;line-height:44px">AS1</div>
<div class="a c" style="left:1024px;top:580px;width:150px;height:44px;line-height:44px"><span class="blue">闲</span>(3) <span class="red">庄</span>(2)</div>
<div class="a c" style="left:1176px;top:580px;width:108px;height:44px;line-height:44px"><span class="blue">30.00</span></div>
<div class="a c" style="left:1286px;top:580px;width:132px;height:44px;line-height:44px">30.00</div>
<div class="a c" style="left:1420px;top:580px;width:107px;height:44px;line-height:44px"><span class="red">-30.00</span></div>
<div class="a c" style="left:1529px;top:580px;width:377px;height:44px;line-height:44px">796.95/766.95</div>
<div class="a c" style="left:14px;top:626px;width:263px;height:43px;line-height:43px">2025-12-07 05:44:18</div>
<div class="a c" style="left:279px;top:626px;width:199px;height:43px;line-height:43px">523023181858</div>
<div class="a c" style="left:480px;top:626px;width:229px;height:43px;line-height:43px">667516086<span class="ico"><svg width="30" height="30" viewBox="0 0 30 30"><path d="M5.3 5.3 H18 L24.5 9.5 V24.2 H5.3 Z" fill="#f5f5f5" stroke="#cfcfcf" stroke-width="1.1"/><path d="M18 5.3 V9.5 H24.5 Z" fill="#fff" stroke="#cfcfcf" stroke-width="1"/><rect x="10.3" y="11.3" width="8.6" height="5.4" fill="#c2c2c2"/><path d="M7.6 12.2 L10.4 13 V15.4 L7.6 16.2 Z" fill="#c4c4c4"/><circle cx="19.9" cy="19.1" r="5.8" fill="#f3f3f3" stroke="#cdcdcd" stroke-width="1.1"/><circle cx="17.1" cy="17.1" r="1.35" fill="#bababa"/><circle cx="21.2" cy="16.3" r="1.35" fill="#bababa"/><circle cx="23" cy="19.6" r="1.35" fill="#bababa"/><circle cx="19.9" cy="22" r="1.35" fill="#bababa"/><circle cx="16.7" cy="20.7" r="1.35" fill="#bababa"/></svg></span></div>
<div class="a c" style="left:711px;top:626px;width:94px;height:43px;line-height:43px">11-9</div>
<div class="a c" style="left:807px;top:626px;width:132px;height:43px;line-height:43px">百家乐</div>
<div class="a c" style="left:941px;top:626px;width:81px;height:43px;line-height:43px">AS1</div>
<div class="a c" style="left:1024px;top:626px;width:150px;height:43px;line-height:43px"><span class="blue">闲</span>(6) <span class="red">庄</span>(9)</div>
<div class="a c" style="left:1176px;top:626px;width:108px;height:43px;line-height:43px"><span class="blue">30.00</span></div>
<div class="a c" style="left:1286px;top:626px;width:132px;height:43px;line-height:43px">30.00</div>
<div class="a c" style="left:1420px;top:626px;width:107px;height:43px;line-height:43px"><span class="red">-30.00</span></div>
<div class="a c" style="left:1529px;top:626px;width:377px;height:43px;line-height:43px">826.95/796.95</div>
<div class="a c" style="left:14px;top:671px;width:263px;height:43px;line-height:43px">2025-12-07 05:43:41</div>
<div class="a c" style="left:279px;top:671px;width:199px;height:43px;line-height:43px">523023180651</div>
<div class="a c" style="left:480px;top:671px;width:229px;height:43px;line-height:43px">667515988<span class="ico"><svg width="30" height="30" viewBox="0 0 30 30"><path d="M5.3 5.3 H18 L24.5 9.5 V24.2 H5.3 Z" fill="#f5f5f5" stroke="#cfcfcf" stroke-width="1.1"/><path d="M18 5.3 V9.5 H24.5 Z" fill="#fff" stroke="#cfcfcf" stroke-width="1"/><rect x="10.3" y="11.3" width="8.6" height="5.4" fill="#c2c2c2"/><path d="M7.6 12.2 L10.4 13 V15.4 L7.6 16.2 Z" fill="#c4c4c4"/><circle cx="19.9" cy="19.1" r="5.8" fill="#f3f3f3" stroke="#cdcdcd" stroke-width="1.1"/><circle cx="17.1" cy="17.1" r="1.35" fill="#bababa"/><circle cx="21.2" cy="16.3" r="1.35" fill="#bababa"/><circle cx="23" cy="19.6" r="1.35" fill="#bababa"/><circle cx="19.9" cy="22" r="1.35" fill="#bababa"/><circle cx="16.7" cy="20.7" r="1.35" fill="#bababa"/></svg></span></div>
<div class="a c" style="left:711px;top:671px;width:94px;height:43px;line-height:43px">11-8</div>
<div class="a c" style="left:807px;top:671px;width:132px;height:43px;line-height:43px">百家乐</div>
<div class="a c" style="left:941px;top:671px;width:81px;height:43px;line-height:43px">AS1</div>
<div class="a c" style="left:1024px;top:671px;width:150px;height:43px;line-height:43px"><span class="blue">闲</span>(0) <span class="red">庄</span>(7)</div>
<div class="a c" style="left:1176px;top:671px;width:108px;height:43px;line-height:43px"><span class="blue">30.00</span></div>
<div class="a c" style="left:1286px;top:671px;width:132px;height:43px;line-height:43px">30.00</div>
<div class="a c" style="left:1420px;top:671px;width:107px;height:43px;line-height:43px">28.50</div>
<div class="a c" style="left:1529px;top:671px;width:377px;height:43px;line-height:43px">798.45/826.95</div>
<div class="a c" style="left:14px;top:716px;width:263px;height:44px;line-height:44px">2025-12-07 05:43:06</div>
<div class="a c" style="left:279px;top:716px;width:199px;height:44px;line-height:44px">523023179544</div>
<div class="a c" style="left:480px;top:716px;width:229px;height:44px;line-height:44px">667515880<span class="ico"><svg width="30" height="30" viewBox="0 0 30 30"><path d="M5.3 5.3 H18 L24.5 9.5 V24.2 H5.3 Z" fill="#f5f5f5" stroke="#cfcfcf" stroke-width="1.1"/><path d="M18 5.3 V9.5 H24.5 Z" fill="#fff" stroke="#cfcfcf" stroke-width="1"/><rect x="10.3" y="11.3" width="8.6" height="5.4" fill="#c2c2c2"/><path d="M7.6 12.2 L10.4 13 V15.4 L7.6 16.2 Z" fill="#c4c4c4"/><circle cx="19.9" cy="19.1" r="5.8" fill="#f3f3f3" stroke="#cdcdcd" stroke-width="1.1"/><circle cx="17.1" cy="17.1" r="1.35" fill="#bababa"/><circle cx="21.2" cy="16.3" r="1.35" fill="#bababa"/><circle cx="23" cy="19.6" r="1.35" fill="#bababa"/><circle cx="19.9" cy="22" r="1.35" fill="#bababa"/><circle cx="16.7" cy="20.7" r="1.35" fill="#bababa"/></svg></span></div>
<div class="a c" style="left:711px;top:716px;width:94px;height:44px;line-height:44px">11-7</div>
<div class="a c" style="left:807px;top:716px;width:132px;height:44px;line-height:44px">百家乐</div>
<div class="a c" style="left:941px;top:716px;width:81px;height:44px;line-height:44px">AS1</div>
<div class="a c" style="left:1024px;top:716px;width:150px;height:44px;line-height:44px"><span class="blue">闲</span>(8) <span class="red">庄</span>(7)</div>
<div class="a c" style="left:1176px;top:716px;width:108px;height:44px;line-height:44px"><span class="blue">20.00</span></div>
<div class="a c" style="left:1286px;top:716px;width:132px;height:44px;line-height:44px">20.00</div>
<div class="a c" style="left:1420px;top:716px;width:107px;height:44px;line-height:44px"><span class="red">-20.00</span></div>
<div class="a c" style="left:1529px;top:716px;width:377px;height:44px;line-height:44px">818.45/798.45</div>
<div class="a" style="left:14px;top:760px;width:1892px;height:30px;background:#999"></div>
<div class="a" style="left:14px;top:790px;width:1892px;height:2px;background:#e6e6e6"></div>
<div class="a" style="left:14px;top:792px;width:1892px;height:30px;background:#999"></div>
<div class="a" style="left:14px;top:822px;width:1892px;height:3px;background:linear-gradient(rgba(0,0,0,0.08),rgba(0,0,0,0))"></div>
<div class="a" style="left:277px;top:760px;width:2px;height:62px;background:#e6e6e6"></div>
<div class="a" style="left:478px;top:760px;width:2px;height:62px;background:#e6e6e6"></div>
<div class="a" style="left:709px;top:760px;width:2px;height:62px;background:#e6e6e6"></div>
<div class="a" style="left:805px;top:760px;width:2px;height:62px;background:#e6e6e6"></div>
<div class="a" style="left:939px;top:760px;width:2px;height:62px;background:#e6e6e6"></div>
<div class="a" style="left:1022px;top:760px;width:2px;height:62px;background:#e6e6e6"></div>
<div class="a" style="left:1174px;top:760px;width:2px;height:62px;background:#e6e6e6"></div>
<div class="a" style="left:1284px;top:760px;width:2px;height:62px;background:#e6e6e6"></div>
<div class="a" style="left:1418px;top:760px;width:2px;height:62px;background:#e6e6e6"></div>
<div class="a" style="left:1527px;top:760px;width:2px;height:62px;background:#e6e6e6"></div>
<div class="a ft" style="left:14px;top:760px;width:263px;height:30px">小计</div>
<div class="a ft" style="left:279px;top:760px;width:199px;height:30px">8</div>
<div class="a ft" style="left:1176px;top:760px;width:108px;height:30px">270.00</div>
<div class="a ft" style="left:1286px;top:760px;width:132px;height:30px">220.00</div>
<div class="a ft" style="left:1420px;top:760px;width:107px;height:30px"><span class="red">-3.00</span></div>
<div class="a ft" style="left:14px;top:792px;width:263px;height:30px">总计</div>
<div class="a ft" style="left:279px;top:792px;width:199px;height:30px">8</div>
<div class="a ft" style="left:1176px;top:792px;width:108px;height:30px">270.00</div>
<div class="a ft" style="left:1286px;top:792px;width:132px;height:30px">220.00</div>
<div class="a ft" style="left:1420px;top:792px;width:107px;height:30px"><span class="red">-3.00</span></div>

<div class="a pg" style="left:1879px;top:843px"><svg class="a" style="left:11px;top:9px" width="6" height="10" viewBox="0 0 6 10"><path d="M4 0.2 H5.1 V9.4 H4 V1.8 Q2.9 2.9 1 3.6 V2.5 Q3 1.6 4 0.2Z" fill="#fff"/></svg></div>

</body></html>
